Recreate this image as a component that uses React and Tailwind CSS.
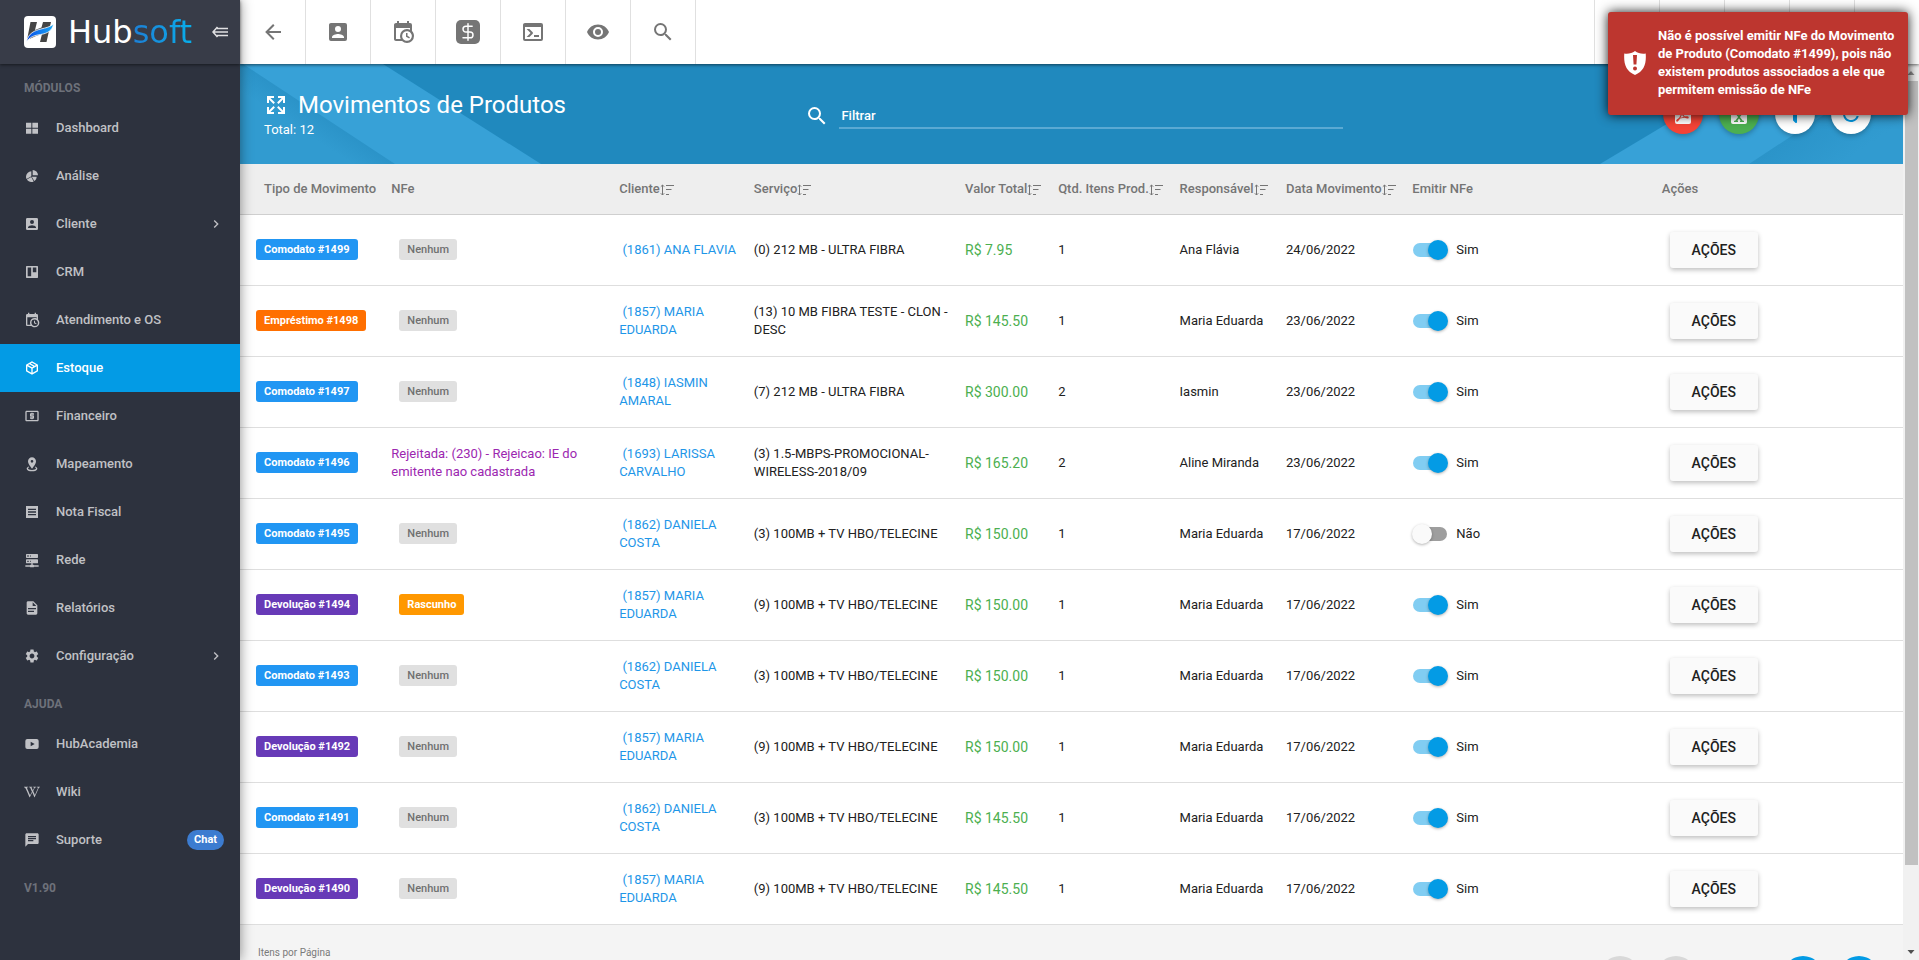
import React, { useState } from 'react';
import { clsx } from 'clsx';
import { DollarSign } from 'lucide-react';
import { FaWikipediaW } from 'react-icons/fa';
import { MdChevronRight, MdLocalAtm, MdRefresh, MdSearch, MdSettings, MdChat } from 'react-icons/md';

const PATHS = {
  back: 'M20,11V13H8L13.5,18.5L12.08,19.92L4.16,12L12.08,4.08L13.5,5.5L8,11H20Z',
  account:
    'M6,17C6,15 10,13.9 12,13.9C14,13.9 18,15 18,17V18H6M15,9A3,3 0 0,1 12,12A3,3 0 0,1 9,9A3,3 0 0,1 12,6A3,3 0 0,1 15,9M3,5V19A2,2 0 0,0 5,21H19A2,2 0 0,0 21,19V5A2,2 0 0,0 19,3H5C3.89,3 3,3.9 3,5Z',
  calendar:
    'M15,13H16.5V15.82L18.94,17.23L18.19,18.53L15,16.69V13M19,8H5V19H9.67C9.24,18.09 9,17.07 9,16A7,7 0 0,1 16,9C17.07,9 18.09,9.24 19,9.67V8M5,21C3.89,21 3,20.1 3,19V5C3,3.89 3.89,3 5,3H6V1H8V3H16V1H18V3H19A2,2 0 0,1 21,5V11.1C22.24,12.36 23,14.09 23,16A7,7 0 0,1 16,23C14.09,23 12.36,22.24 11.1,21H5M16,11.15A4.85,4.85 0 0,0 11.15,16C11.15,18.68 13.32,20.85 16,20.85A4.85,4.85 0 0,0 20.85,16C20.85,13.32 18.68,11.15 16,11.15Z',
  console:
    'M20,19V7H4V19H20M20,3A2,2 0 0,1 22,5V19A2,2 0 0,1 20,21H4A2,2 0 0,1 2,19V5C2,3.89 2.9,3 4,3H20M13,17V15H18V17H13M9.58,13L5.57,9H8.4L11.7,12.3C12.09,12.69 12.09,13.33 11.7,13.72L8.42,17H5.59L9.58,13Z',
  eye: 'M12,9A3,3 0 0,0 9,12A3,3 0 0,0 12,15A3,3 0 0,0 15,12A3,3 0 0,0 12,9M12,17A5,5 0 0,1 7,12A5,5 0 0,1 12,7A5,5 0 0,1 17,12A5,5 0 0,1 12,17M12,4.5C7,4.5 2.73,7.61 1,12C2.73,16.39 7,19.5 12,19.5C17,19.5 21.27,16.39 23,12C21.27,7.61 17,4.5 12,4.5Z',
  tiles: 'M3,4H11V11.5H3V4M12.5,4H21V11.5H12.5V4M3,13H11V20.5H3V13M12.5,13H21V20.5H12.5V13Z',
  pie: 'M21,11H13V3A8,8 0 0,1 21,11M19,13C19,15.78 17.58,18.23 15.43,19.67L11.58,13H19M11,21C8.22,21 5.77,19.58 4.33,17.43L10.82,13.68L14.56,20.17C13.5,20.7 12.28,21 11,21M3,13A8,8 0 0,1 11,5V12.42L3.83,16.56C3.3,15.5 3,14.28 3,13Z',
  board: 'M4,3H20A1,1 0 0,1 21,4V20A1,1 0 0,1 20,21H4A1,1 0 0,1 3,20V4A1,1 0 0,1 4,3M5.5,5.25V18.5H10.75V5.25H5.5M13.25,5.25V12.5H18.5V5.25H13.25Z',
  box: 'M21,16.5C21,16.88 20.79,17.21 20.47,17.38L12.57,21.82C12.41,21.94 12.21,22 12,22C11.79,22 11.59,21.94 11.43,21.82L3.53,17.38C3.21,17.21 3,16.88 3,16.5V7.5C3,7.12 3.21,6.79 3.53,6.62L11.43,2.18C11.59,2.06 11.79,2 12,2C12.21,2 12.41,2.06 12.57,2.18L20.47,6.62C20.79,6.79 21,7.12 21,7.5V16.5M12,4.15L10.11,5.22L16,8.61L17.96,7.5L12,4.15M6.04,7.5L12,10.85L13.96,9.75L8.08,6.35L6.04,7.5M5,15.91L11,19.29V12.58L5,9.21V15.91M19,15.91V9.21L13,12.58V19.29L19,15.91Z',
  marker:
    'M12,2C15.31,2 18,4.66 18,7.95C18,12.41 12,19 12,19C12,19 6,12.41 6,7.95C6,4.66 8.69,2 12,2M12,6A2,2 0 0,0 10,8A2,2 0 0,0 12,10A2,2 0 0,0 14,8A2,2 0 0,0 12,6M20,19C20,21.21 16.42,23 12,23C7.58,23 4,21.21 4,19C4,17.71 5.22,16.56 7.11,15.83L7.75,16.74C6.67,17.19 6,17.81 6,18.5C6,19.88 8.69,21 12,21C15.31,21 18,19.88 18,18.5C18,17.81 17.33,17.19 16.25,16.74L16.89,15.83C18.78,16.56 20,17.71 20,19Z',
  note: 'M3,3H21V21H3V3M6,7V9H18V7H6M6,11V13H18V11H6M6,15V17H18V15H6Z',
  server:
    'M13,19H14A1,1 0 0,1 15,20H22V22H15A1,1 0 0,1 14,23H10A1,1 0 0,1 9,22H2V20H9A1,1 0 0,1 10,19H11V17H4A1,1 0 0,1 3,16V12A1,1 0 0,1 4,11H20A1,1 0 0,1 21,12V16A1,1 0 0,1 20,17H13V19M4,3H20A1,1 0 0,1 21,4V8A1,1 0 0,1 20,9H4A1,1 0 0,1 3,8V4A1,1 0 0,1 4,3M9,7H10V5H9V7M9,15H10V13H9V15M5,5V7H7V5H5M5,13V15H7V13H5Z',
  document:
    'M13,9H18.5L13,3.5V9M6,2H14L20,8V20A2,2 0 0,1 18,22H6C4.89,22 4,21.1 4,20V4C4,2.89 4.89,2 6,2M15,18V16H6V18H15M18,14V12H6V14H18Z',
  video: 'M5,4.5H19A3,3 0 0,1 22,7.5V16.5A3,3 0 0,1 19,19.5H5A3,3 0 0,1 2,16.5V7.5A3,3 0 0,1 5,4.5M10,8.5V15.5L16,12L10,8.5Z',
  expand:
    'M9.5,13.09L10.91,14.5L6.41,19H10V21H3V14H5V17.59L9.5,13.09M10.91,9.5L9.5,10.91L5,6.41V10H3V3H10V5H6.41L10.91,9.5M14.5,13.09L19,17.59V14H21V21H14V19H17.59L13.09,14.5L14.5,13.09M13.09,9.5L17.59,5H14V3H21V10H19V6.41L14.5,10.91L13.09,9.5Z',
  pdf: 'M14,2H6A2,2 0 0,0 4,4V20A2,2 0 0,0 6,22H18A2,2 0 0,0 20,20V8L14,2M10.1,11.4C10.08,11.44 9.81,13.16 8,16.09C8,16.09 4.5,17.91 5.33,19.27C6,20.35 7.65,19.23 9.07,16.59C9.07,16.59 10.89,15.95 13.31,15.77C13.31,15.77 17.17,17.5 17.7,15.66C18.22,13.8 14.64,14.22 14,14.41C14,14.41 12,13.06 11.5,11.2C11.5,11.2 12.64,7.25 10.89,7.3C9.14,7.35 9.8,10.43 10.1,11.4M10.91,12.44C10.94,12.45 11.38,13.65 12.8,14.9C12.8,14.9 10.47,15.36 9.41,15.8C9.41,15.8 10.41,14.07 10.91,12.44Z',
  excel:
    'M14,2H6A2,2 0 0,0 4,4V20A2,2 0 0,0 6,22H18A2,2 0 0,0 20,20V8L14,2M17,20H13V18.75H13.75L12,16.5L10.25,18.75H11V20H7V18.75H8.2L11.1,15L8.2,11.25H7V10H11V11.25H10.25L12,13.5L13.75,11.25H13V10H17V11.25H15.8L12.9,15L15.8,18.75H17V20M13,9V3.5L18.5,9H13Z',
  filter:
    'M14,12V19.88C14.04,20.18 13.94,20.5 13.71,20.71C13.32,21.1 12.69,21.1 12.3,20.71L10.29,18.7C10.06,18.47 9.96,18.16 10,17.87V12H9.97L4.21,4.62C3.87,4.19 3.95,3.56 4.38,3.22C4.57,3.08 4.78,3 5,3H19C19.22,3 19.43,3.08 19.62,3.22C20.05,3.56 20.13,4.19 19.79,4.62L14.03,12H14Z'
};

const modules = [
  { name: 'Dashboard', icon: 'tiles' },
  { name: 'Análise', icon: 'pie' },
  { name: 'Cliente', icon: 'account', expandable: true },
  { name: 'CRM', icon: 'board' },
  { name: 'Atendimento e OS', icon: 'calendar' },
  { name: 'Estoque', icon: 'box', active: true },
  { name: 'Financeiro', icon: MdLocalAtm },
  { name: 'Mapeamento', icon: 'marker' },
  { name: 'Nota Fiscal', icon: 'note' },
  { name: 'Rede', icon: 'server' },
  { name: 'Relatórios', icon: 'document' },
  { name: 'Configuração', icon: MdSettings, expandable: true }
];

const help = [
  { name: 'HubAcademia', icon: 'video' },
  { name: 'Wiki', icon: FaWikipediaW },
  { name: 'Suporte', icon: MdChat, badge: 'Chat' }
];

const columns = [
  { name: 'Tipo de Movimento', width: 'w-[9.1%]' },
  { name: 'NFe', width: 'w-[13.7%]' },
  { name: 'Cliente', width: 'w-[8.1%]', sortable: true },
  { name: 'Serviço', width: 'w-[12.7%]', sortable: true },
  { name: 'Valor Total', width: 'w-[5.6%]', sortable: true },
  { name: 'Qtd. Itens Prod.', width: 'w-[7.3%]', sortable: true },
  { name: 'Responsável', width: 'w-[6.4%]', sortable: true },
  { name: 'Data Movimento', width: 'w-[7.6%]', sortable: true },
  { name: 'Emitir NFe', width: 'w-[15%]' },
  { name: 'Ações', width: 'w-[14.5%]' }
];

const rows = [
  { id: 1499, type: 'Comodato', client: '(1861) ANA FLAVIA', service: '(0) 212 MB - ULTRA FIBRA', total: '7.95', items: 1, owner: 'Ana Flávia', date: '24/06/2022', emit: true },
  { id: 1498, type: 'Empréstimo', client: '(1857) MARIA EDUARDA', service: '(13) 10 MB FIBRA TESTE - CLON - DESC', total: '145.50', items: 1, owner: 'Maria Eduarda', date: '23/06/2022', emit: true },
  { id: 1497, type: 'Comodato', client: '(1848) IASMIN AMARAL', service: '(7) 212 MB - ULTRA FIBRA', total: '300.00', items: 2, owner: 'Iasmin', date: '23/06/2022', emit: true },
  { id: 1496, type: 'Comodato', rejection: 'Rejeitada: (230) - Rejeicao: IE do emitente nao cadastrada', client: '(1693) LARISSA CARVALHO', service: '(3) 1.5-MBPS-PROMOCIONAL-WIRELESS-2018/09', total: '165.20', items: 2, owner: 'Aline Miranda', date: '23/06/2022', emit: true },
  { id: 1495, type: 'Comodato', client: '(1862) DANIELA COSTA', service: '(3) 100MB + TV HBO/TELECINE', total: '150.00', items: 1, owner: 'Maria Eduarda', date: '17/06/2022', emit: false },
  { id: 1494, type: 'Devolução', draft: true, client: '(1857) MARIA EDUARDA', service: '(9) 100MB + TV HBO/TELECINE', total: '150.00', items: 1, owner: 'Maria Eduarda', date: '17/06/2022', emit: true },
  { id: 1493, type: 'Comodato', client: '(1862) DANIELA COSTA', service: '(3) 100MB + TV HBO/TELECINE', total: '150.00', items: 1, owner: 'Maria Eduarda', date: '17/06/2022', emit: true },
  { id: 1492, type: 'Devolução', client: '(1857) MARIA EDUARDA', service: '(9) 100MB + TV HBO/TELECINE', total: '150.00', items: 1, owner: 'Maria Eduarda', date: '17/06/2022', emit: true },
  { id: 1491, type: 'Comodato', client: '(1862) DANIELA COSTA', service: '(3) 100MB + TV HBO/TELECINE', total: '145.50', items: 1, owner: 'Maria Eduarda', date: '17/06/2022', emit: true },
  { id: 1490, type: 'Devolução', client: '(1857) MARIA EDUARDA', service: '(9) 100MB + TV HBO/TELECINE', total: '145.50', items: 1, owner: 'Maria Eduarda', date: '17/06/2022', emit: true }
];

const typeColors = {
  Comodato: 'bg-[#2196f3]',
  Empréstimo: 'bg-[#ff6f00]',
  Devolução: 'bg-[#673ab7]'
};

function Icon({ name, className }) {
  return (
    <svg viewBox="0 0 24 24" fill="currentColor" fillRule="evenodd" className={className} aria-hidden="true">
      <path d={PATHS[name]} />
    </svg>
  );
}

function SortIcon() {
  return (
    <svg viewBox="0 0 14 14" className="h-3.5 w-3.5" fill="none" stroke="currentColor" aria-hidden="true">
      <path d="M2.5 3v10M.8 4.700 2.500 3l1.700 1.700M.8 11.300l1.700 1.700 1.700-1.700M6 3.500h8M6 7.500h5.500M6 12.500h3" />
    </svg>
  );
}

function Logo() {
  return (
    <svg viewBox="0 0 32 32" className="h-8 w-8" aria-hidden="true">
      <defs>
        <linearGradient id="swoosh" x1="0" x2="1">
          <stop offset="0" stopColor="#0a4fe8" />
          <stop offset="1" stopColor="#19a7f5" />
        </linearGradient>
      </defs>
      <rect width="32" height="32" rx="4" fill="#fff" />
      <path d="M6.500 6h6.500l-2 8 6.500-2.500L19 6h8l-4.500 20h-6.500l2-8-6 2L3 24z" fill="#454545" />
      <path d="M2.500 26C4 17 11 14.500 17 13c5-1.200 9-2 12.500-5-1 6.500-6 9.500-13 10.500C10 19.500 5.500 21 2.500 26z" fill="url(#swoosh)" stroke="#fff" strokeWidth=".8" />
    </svg>
  );
}

function NavItem({ item }) {
  const Glyph = item.icon;

  return (
    <a
      href="#"
      className={clsx(
        'flex h-12 items-center pr-4 pl-6 text-[13px] font-medium',
        item.active ? 'bg-[#039be5] text-white' : 'text-[#c0c1c5]'
      )}
    >
      {typeof Glyph === 'string' ? <Icon name={Glyph} className="h-4 w-4" /> : <Glyph className="h-4 w-4" />}
      <span className="ml-4">{item.name}</span>
      {item.expandable && <MdChevronRight className="ml-auto h-4 w-4" />}
      {item.badge && (
        <span className="ml-auto flex h-5 items-center rounded-full bg-[#3c7cd0] px-[7px] text-[11px] font-bold text-white">
          {item.badge}
        </span>
      )}
    </a>
  );
}

function Sidebar() {
  return (
    <aside className="relative z-20 flex w-60 shrink-0 flex-col bg-[#2d323e] shadow-[0_0_12px_rgba(0,0,0,0.45)]">
      <div className="flex h-16 shrink-0 items-center bg-[#383c48] pr-3 pl-6 shadow-[0_1px_3px_rgba(0,0,0,0.5)]">
        <Logo />
        <span className="ml-3 font-['DejaVu_Sans'] text-[32px] leading-8 text-white">
          Hub<span className="bg-linear-to-r from-[#1c7fd6] to-[#06aeea] bg-clip-text text-transparent">soft</span>
        </span>
        <button type="button" aria-label="Recolher menu" className="ml-auto text-[#e0e0e2]">
          <svg viewBox="0 0 16 12" className="h-3 w-4" fill="none" stroke="currentColor" strokeWidth="1.600" aria-hidden="true">
            <path d="M5.500 1 1 6l4.500 5M5 2.500h11M2 6h14M5 9.500h11" />
          </svg>
        </button>
      </div>
      <nav className="text-[13px]">
        <h2 className="flex h-10 items-center pt-2 pl-6 text-[12px] font-bold text-[#6d717a]">MÓDULOS</h2>
        {modules.map(item => (
          <NavItem key={item.name} item={item} />
        ))}
        <h2 className="flex h-10 items-center pt-2 pl-6 text-[12px] font-bold text-[#6d717a]">AJUDA</h2>
        {help.map(item => (
          <NavItem key={item.name} item={item} />
        ))}
        <p className="flex h-10 items-center pt-2 pl-6 text-[12px] font-bold text-[#6d717a]">V1.90</p>
      </nav>
    </aside>
  );
}

function ToolbarButton({ label, children }) {
  return (
    <button type="button" aria-label={label} className="flex h-16 w-[65px] items-center justify-center border-r border-[#e0e0e0]">
      {children}
    </button>
  );
}

function Toolbar() {
  return (
    <header className="relative z-10 flex h-16 shrink-0 bg-white pl-px text-[#757575] shadow-[0_1px_3px_rgba(0,0,0,0.55)]">
      <ToolbarButton label="Voltar"><Icon name="back" className="h-6 w-6" /></ToolbarButton>
      <ToolbarButton label="Clientes"><Icon name="account" className="h-6 w-6" /></ToolbarButton>
      <ToolbarButton label="Agenda"><Icon name="calendar" className="h-6 w-6" /></ToolbarButton>
      <ToolbarButton label="Financeiro">
        <span className="flex h-6 w-6 items-center justify-center rounded-[5px] bg-[#757575] text-white">
          <DollarSign className="h-5 w-5" strokeWidth={1.75} />
        </span>
      </ToolbarButton>
      <ToolbarButton label="Console"><Icon name="console" className="h-6 w-6" /></ToolbarButton>
      <ToolbarButton label="Visualizar"><Icon name="eye" className="h-6 w-6" /></ToolbarButton>
      <ToolbarButton label="Pesquisar"><MdSearch className="h-6 w-6" /></ToolbarButton>
      <div className="ml-auto flex">
        {[1, 2, 3, 4, 5].map(n => (
          <div key={n} className="h-16 w-[65px] border-l border-[#e0e0e0]" />
        ))}
      </div>
    </header>
  );
}

function Fab({ label, className, children }) {
  return (
    <button
      type="button"
      aria-label={label}
      className={clsx('flex h-10 w-10 items-center justify-center rounded-full shadow-[0_2px_5px_rgba(0,0,0,0.26)]', className)}
    >
      {children}
    </button>
  );
}

function Banner() {
  return (
    <section className="relative flex h-[100px] shrink-0 items-center bg-[#2089be] text-white">
      <svg className="absolute top-0 left-0 h-[100px] w-[301px]" viewBox="0 0 301 100" aria-hidden="true">
        <defs>
          <linearGradient id="foldLeft" gradientUnits="userSpaceOnUse" x1="48" y1="58" x2="61" y2="38">
            <stop offset="0" stopColor="#319bd0" />
            <stop offset="1" stopColor="#2b93c8" />
          </linearGradient>
        </defs>
        <path d="M0 0h143l158 100H0z" fill="#37a1d7" />
        <path d="M0 0h3l152 100H0z" fill="url(#foldLeft)" />
      </svg>
      <svg className="absolute top-0 right-0 h-[100px] w-[303px]" viewBox="0 0 303 100" aria-hidden="true">
        <defs>
          <linearGradient id="foldRight" gradientUnits="userSpaceOnUse" x1="200" y1="66" x2="228" y2="108">
            <stop offset="0" stopColor="#2b94c9" />
            <stop offset="1" stopColor="#319bd0" />
          </linearGradient>
        </defs>
        <path d="M0 100 167 0h136v100z" fill="#37a1d7" />
        <path d="M149 100 301 0h2v100z" fill="url(#foldRight)" />
      </svg>

      <div className="relative w-[34%] pl-6">
        <div className="flex items-center gap-2.5">
          <button type="button" aria-label="Tela cheia"><Icon name="expand" className="block h-6 w-6" /></button>
          <h1 className="text-[24px] leading-8">Movimentos de Produtos</h1>
        </div>
        <p className="text-[13px] leading-[18px]">Total: 12</p>
      </div>

      <div className="relative flex w-[32.300%] items-center pt-1">
        <MdSearch className="h-6 w-6 shrink-0" />
        <input
          type="text"
          aria-label="Filtrar"
          placeholder="Filtrar"
          className="ml-2.5 h-[26px] w-full border-b-2 border-[#5aa9d3] bg-transparent pl-0.5 text-[13px] font-medium outline-none placeholder:text-white"
        />
      </div>

      <div className="relative ml-auto flex gap-4 pr-8">
        <Fab label="Exportar PDF" className="bg-[#f44336]"><Icon name="pdf" className="h-6 w-6" /></Fab>
        <Fab label="Exportar Excel" className="bg-[#4caf50]"><Icon name="excel" className="h-6 w-6" /></Fab>
        <Fab label="Filtros" className="bg-white text-[#039be5]"><Icon name="filter" className="h-6 w-6" /></Fab>
        <Fab label="Atualizar" className="bg-white text-[#039be5]"><MdRefresh className="h-6 w-6" /></Fab>
      </div>
    </section>
  );
}

function Tag({ className, children }) {
  return (
    <span className={clsx('inline-flex h-[21px] items-center rounded-[3px] px-2 align-middle text-[11px] whitespace-nowrap', className)}>
      {children}
    </span>
  );
}

function Switch({ id, checked, onChange }) {
  return (
    <label className="flex items-center gap-2">
      <input type="checkbox" className="peer sr-only" checked={checked} onChange={() => onChange(id)} />
      <span className={clsx('mx-px flex h-3.5 w-[34px] items-center rounded-full', checked ? 'justify-end bg-[#81cdf2]' : 'bg-[#9e9e9e]')}>
        <span
          className={clsx(
            '-mx-px h-5 w-5 shrink-0 rounded-full shadow-[0_1px_3px_rgba(0,0,0,0.3)]',
            checked ? 'bg-[#039be5]' : 'bg-[#fafafa]'
          )}
        />
      </span>
      {checked ? 'Sim' : 'Não'}
    </label>
  );
}

function MovementsTable() {
  const [emit, setEmit] = useState(() => Object.fromEntries(rows.map(row => [row.id, row.emit])));
  const toggle = id => setEmit(current => ({ ...current, [id]: !current[id] }));

  return (
    <table className="w-full table-fixed border-collapse bg-white text-left text-[13px] leading-[18px] text-[#212121]">
      <thead>
        <tr className="h-[50px] border-b border-[#cfcfcf] bg-[#eeeeee] text-[#757575]">
          {columns.map((column, index) => (
            <th key={column.name} scope="col" className={clsx('font-medium whitespace-nowrap', column.width, index === 0 && 'pl-6')}>
              <span className="inline-flex items-center">
                {column.name}
                {column.sortable && <SortIcon />}
              </span>
            </th>
          ))}
        </tr>
      </thead>
      <tbody>
        {rows.map(row => (
          <tr key={row.id} className="h-[71px] border-b border-[#dedede]">
            <td className="pl-4">
              <Tag className={clsx('font-bold text-white', typeColors[row.type])}>
                {row.type} #{row.id}
              </Tag>
            </td>
            <td className="pr-4">
              {row.rejection && <span className="text-[#9c27b0]">{row.rejection}</span>}
              {row.draft && <Tag className="ml-2 bg-[#ff9800] font-bold text-white">Rascunho</Tag>}
              {!row.rejection && !row.draft && <Tag className="ml-2 bg-[#e0e0e0] font-medium text-[#707070]">Nenhum</Tag>}
            </td>
            <td className="pr-4">
              <a href="#" className="text-[#1e96e8]">&nbsp;{row.client}</a>
            </td>
            <td className="pr-4">{row.service}</td>
            <td className="text-[14px] whitespace-nowrap text-[#4caf50]">R$ {row.total}</td>
            <td>{row.items}</td>
            <td className="whitespace-nowrap">{row.owner}</td>
            <td>{row.date}</td>
            <td><Switch id={row.id} checked={emit[row.id]} onChange={toggle} /></td>
            <td>
              <button
                type="button"
                className="ml-2 h-9 w-[88px] rounded-[3px] bg-[#fafafa] text-[14px] font-medium shadow-[0_2px_5px_rgba(0,0,0,0.26)]"
              >
                AÇÕES
              </button>
            </td>
          </tr>
        ))}
      </tbody>
    </table>
  );
}

function Pagination() {
  return (
    <footer className="flex min-h-24 items-start bg-[#f4f4f4] pr-6">
      <p className="pt-[22px] pl-[18px] text-[10px] leading-3 text-[#7a7a7a]">Itens por Página</p>
      <div className="ml-auto flex gap-4 pt-[31px]">
        <button type="button" aria-label="Primeira página" className="h-10 w-10 rounded-full bg-[#d8d8d8]" />
        <button type="button" aria-label="Página anterior" className="h-10 w-10 rounded-full bg-[#d8d8d8]" />
        <span className="w-[55px]" />
        <button type="button" aria-label="Próxima página" className="h-10 w-10 rounded-full bg-[#039be5]" />
        <button type="button" aria-label="Última página" className="h-10 w-10 rounded-full bg-[#039be5]" />
      </div>
    </footer>
  );
}

function ScrollTrack() {
  return (
    <div className="flex w-4 shrink-0 flex-col items-center bg-[#f1f1f1]" aria-hidden="true">
      <svg viewBox="0 0 16 17" className="h-[17px] w-4 shrink-0"><path d="M4.500 11 8 7l3.500 4z" fill="#8c8c8c" /></svg>
      <div className="w-[13px] grow-[784] bg-[#c1c1c1]" />
      <div className="grow-[78]" />
      <svg viewBox="0 0 16 17" className="h-[17px] w-4 shrink-0"><path d="M4.500 7h7L8 11z" fill="#505050" /></svg>
    </div>
  );
}

function Toast() {
  return (
    <div
      role="alert"
      className="absolute top-3 right-[11px] z-30 flex w-[300px] items-center gap-3 rounded-[3px] bg-[#bd362f] pt-[15px] pr-3 pb-4 pl-4 text-[13px] leading-[18px] font-bold text-white shadow-[0_0_12px_rgba(0,0,0,0.9)]"
    >
      <svg viewBox="0 0 22 24" className="h-6 w-[22px] shrink-0" aria-hidden="true">
        <path d="M11 0C8 2.500 4 3 .3 2.500 -.5 13 2 20 11 24c9-4 11.500-11 10.700-21.500C18 3 14 2.500 11 0z" fill="#fff" />
        <path d="M9 4h4l-.6 9.500H9.600z" fill="#bd362f" />
        <circle cx="11" cy="17.500" r="2" fill="#bd362f" />
      </svg>
      <p>
        Não é possível emitir NFe do Movimento de Produto (Comodato #1499), pois não existem produtos associados a ele que
        permitem emissão de NFe
      </p>
    </div>
  );
}

export default function App() {
  return (
    <div className="relative flex h-screen overflow-hidden bg-[#f4f4f4] font-[Roboto,sans-serif]">
      <Sidebar />
      <div className="flex min-w-0 flex-1 flex-col">
        <Toolbar />
        <div className="flex min-h-0 flex-1">
          <main className="min-w-0 flex-1 overflow-hidden">
            <Banner />
            <MovementsTable />
            <Pagination />
          </main>
          <ScrollTrack />
        </div>
      </div>
      <Toast />
    </div>
  );
}
